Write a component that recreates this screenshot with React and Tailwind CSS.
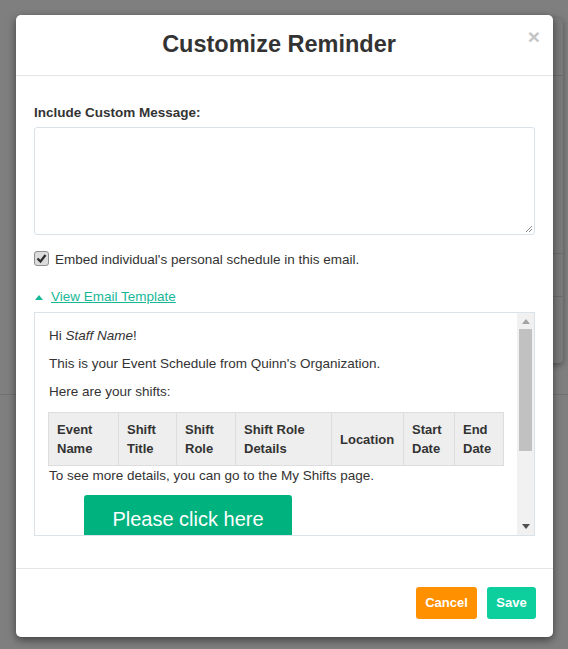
import React from 'react';

const columns = [
  { label: ['Event', 'Name'], w: 'w-[70px]' },
  { label: ['Shift', 'Title'], w: 'w-[58px]' },
  { label: ['Shift', 'Role'], w: 'w-[59px]' },
  { label: ['Shift Role', 'Details'], w: 'w-[96px]' },
  { label: ['Location'], w: 'w-[72px]' },
  { label: ['Start', 'Date'], w: 'w-[51px]' },
  { label: ['End', 'Date'], w: 'w-[49px]' },
];

const App = () => {
  return (
    <div
      className="relative w-[568px] h-[649px] overflow-hidden bg-[#7f7f7f]"
      style={{ fontFamily: '"Liberation Sans", Arial, sans-serif' }}
    >
      {/* the dialog underneath, mostly hidden */}
      <div className="absolute left-[400px] top-[18px] w-[163px] h-[345px] rounded bg-[#7a7a7a] shadow-[0_2px_6px_rgba(0,0,0,0.35)]">
        <div className="mt-[57px] border-t border-[#6c6c6c]" />
        <div className="mt-[177px] border-t border-[#6c6c6c]" />
        <div className="mt-[42px] border-t border-[#6c6c6c]" />
      </div>
      <div className="absolute left-0 top-[394px] w-[568px] border-t border-[#717171]" />

      {/* main dialog */}
      <div className="absolute left-[16px] top-[15px] w-[537px] h-[622px] bg-white rounded-[5px] shadow-[0_3px_9px_rgba(0,0,0,0.5)] flex flex-col">
        <div className="relative h-[61px] pr-[11px] border-b border-[#e5e5e5] flex items-center justify-center">
          <h4 className="text-[23.5px] font-bold text-[#333] leading-none">Customize Reminder</h4>
          <span className="absolute right-[13px] top-[11px] text-[21px] font-bold leading-none text-[#c4c4c4]">×</span>
        </div>

        <div className="px-[18px] pt-[27px] pb-[32px] border-b border-[#e5e5e5]">
          <label className="block text-[13.5px] leading-[20px] font-bold text-[#333] mb-[4px]">Include Custom Message:</label>
          <div className="relative h-[108px] border border-[#d9e2ea] rounded-[3px]">
            <svg className="absolute right-[1px] bottom-[1px]" width="9" height="9" viewBox="0 0 9 9">
              <path d="M8 2 L2 8 M8 5 L5 8" stroke="#888" strokeWidth="1" />
            </svg>
          </div>

          <div className="flex items-center mt-[15px] h-[20px]">
            <span className="-mt-[4px] w-[15px] h-[15px] rounded-[3px] border border-[#8f8f8f] bg-[#dcdcdc] flex items-center justify-center">
              <svg width="11" height="11" viewBox="0 0 11 11">
                <path d="M1.5 5.5 L4.5 8.5 L9.5 2" fill="none" stroke="#2e2e2e" strokeWidth="2.2" />
              </svg>
            </span>
            <span className="ml-[6px] text-[13.5px] text-[#333]">Embed individual's personal schedule in this email.</span>
          </div>

          <div className="flex items-center mt-[17px] h-[20px]">
            <svg className="ml-[1px]" width="8" height="5" viewBox="0 0 8 5">
              <path d="M0 5 L4 0 L8 5 Z" fill="#18b797" />
            </svg>
            <span className="ml-[8px] text-[13.5px] text-[#18b797] underline">View Email Template</span>
          </div>

          <div className="mt-[5px] h-[224px] border border-[#dbe3ea] flex overflow-hidden">
            <div className="flex-1 overflow-hidden pl-[13px] pt-[13px] text-[13.5px] leading-[20px] text-[#333]">
              <p className="mb-[8px] pl-[1px]">Hi <i>Staff Name</i>!</p>
              <p className="mb-[8px] pl-[1px]">This is your Event Schedule from Quinn's Organization.</p>
              <p className="mb-[10px] pl-[1px]">Here are your shifts:</p>
              <table className="table-fixed border-collapse w-[455px]">
                <thead>
                  <tr>
                    {columns.map((c) => (
                      <th
                        key={c.label.join(' ')}
                        className={`${c.w} border border-[#dddddd] bg-[#eeeeee] px-[8px] py-[7px] text-left text-[13px] font-bold leading-[19px] text-[#333] align-middle`}
                      >
                        {c.label.map((l) => (
                          <div key={l} className="whitespace-nowrap">{l}</div>
                        ))}
                      </th>
                    ))}
                  </tr>
                </thead>
              </table>
              <p className="pl-[1px]">To see more details, you can go to the My Shifts page.</p>
              <div className="mt-[9px] ml-[36px] w-[208px] h-[48px] rounded-t-[3px] bg-[#00b27e] text-white text-[20px] flex items-center justify-center">
                Please click here
              </div>
            </div>
            <div className="w-[17px] bg-[#f1f1f1] flex flex-col items-center">
              <svg className="mt-[6px]" width="8" height="5" viewBox="0 0 8 5">
                <path d="M0 5 L4 0 L8 5 Z" fill="#a3a3a3" />
              </svg>
              <div className="mt-[5px] w-[13px] h-[122px] bg-[#c1c1c1]" />
              <div className="flex-1" />
              <svg className="mb-[6px]" width="8" height="5" viewBox="0 0 8 5">
                <path d="M0 0 L8 0 L4 5 Z" fill="#505050" />
              </svg>
            </div>
          </div>
        </div>

        <div className="flex justify-end gap-[10px] pr-[17px] pt-[18px]">
          <button className="w-[61px] h-[32px] rounded-[3px] bg-[#ff9000] text-white text-[13px] font-bold">Cancel</button>
          <button className="w-[49px] h-[32px] rounded-[3px] bg-[#0dce9d] text-white text-[13px] font-bold">Save</button>
        </div>
      </div>
    </div>
  );
};

export default App;
